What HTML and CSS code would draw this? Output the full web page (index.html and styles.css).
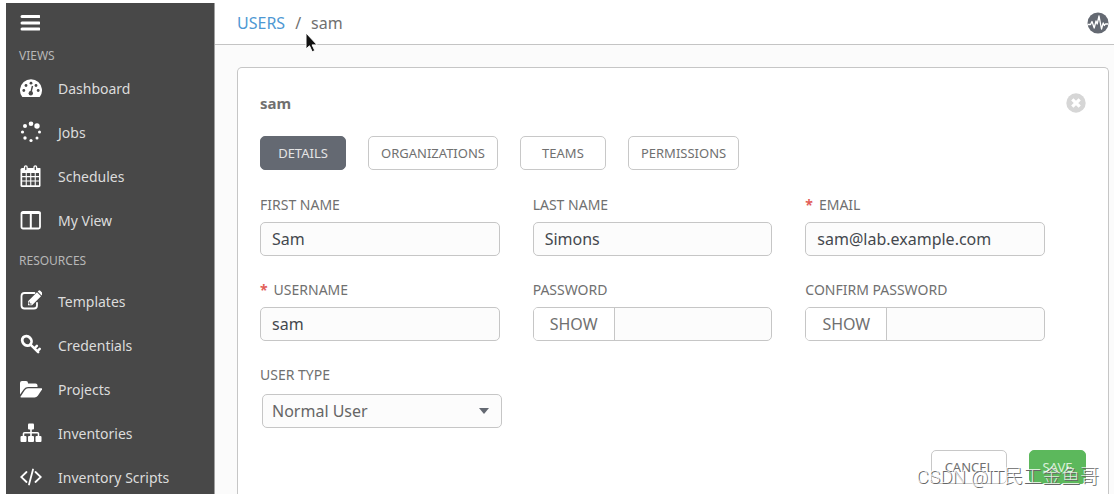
FILE: index.html
```
<!DOCTYPE html>
<html lang="en">
<head>
    <meta charset="UTF-8">
    <meta name="viewport" content="width=device-width, initial-scale=1.0">
    <title>Users / sam</title>
    <link rel="stylesheet" href="styles.css">
</head>
<body>

    <div class="app">
        <nav class="sidebar">
            <button class="menu-toggle" type="button" aria-label="Toggle menu">
                <svg width="20" height="18" viewBox="0 0 20 18"><path d="M2 2.5h17M2 9h17M2 15h17" stroke="#fff" stroke-width="3" stroke-linecap="round"/></svg>
            </button>

            <h2 class="nav-title">VIEWS</h2>
            <a class="nav-item" href="#">
                <svg class="icon" viewBox="0 0 22 22">
                    <path fill="#fff" d="M2 19.5A11 11 0 1 1 20 19.5Q19.700 20 19 20H3Q2.300 20 2 19.500z"/>
                    <g fill="#484848"><circle cx="3.800" cy="13.500" r="1.400"/><circle cx="6" cy="8.500" r="1.400"/><circle cx="11" cy="6.200" r="1.400"/><circle cx="16" cy="8.500" r="1.400"/><circle cx="18.200" cy="13.500" r="1.400"/><circle cx="10.800" cy="16.200" r="2.200"/></g>
                    <path d="M10.800 16l1.700-7" stroke="#484848" stroke-width="1.400"/>
                </svg>
                <span>Dashboard</span>
            </a>
            <a class="nav-item" href="#">
                <svg class="icon" viewBox="0 0 22 22" fill="#fff">
                    <circle cx="11" cy="2.800" r="2.300"/><circle cx="17" cy="5" r="2.700"/><circle cx="19.500" cy="11" r="1.500"/><circle cx="17" cy="17" r="1.500"/><circle cx="11" cy="19.500" r="1.600"/><circle cx="5" cy="17" r="1.700"/><circle cx="2.500" cy="11" r="1.600"/><circle cx="5" cy="5" r="2"/>
                </svg>
                <span>Jobs</span>
            </a>
            <a class="nav-item" href="#">
                <svg class="icon" viewBox="0 0 22 22">
                    <path fill="#fff" d="M2 3h18q.500 0 .500.700V20.500q0 1.500-1.500 1.500H2Q.500 22 .500 20.500V4.500Q.500 3 2 3z"/>
                    <path fill="#484848" d="M2.200 8h3.500v3H2.200zM6.800 8h3.400v3H6.800zM11.300 8h3.400v3h-3.400zM15.800 8h3.200v3h-3.200zM2.200 12.200h3.500v3.200H2.200zM6.800 12.200h3.400v3.200H6.800zM11.300 12.200h3.400v3.200h-3.400zM15.800 12.200h3.200v3.200h-3.200zM2.200 16.600h3.500v3.600H2.200zM6.800 16.600h3.400v3.600H6.800zM11.300 16.600h3.400v3.600h-3.400zM15.800 16.600h3.200v3.600h-3.200z"/>
                    <g fill="#484848" stroke="#fff" stroke-width="1.300"><rect x="4.500" y=".8" width="2.600" height="5" rx="1.300"/><rect x="14" y=".8" width="2.600" height="5" rx="1.300"/></g>
                </svg>
                <span>Schedules</span>
            </a>
            <a class="nav-item" href="#">
                <svg class="icon" viewBox="0 0 22 22">
                    <rect x="1.500" y="3" width="18.500" height="16.500" rx="1.500" fill="none" stroke="#fff" stroke-width="1.800"/>
                    <path d="M1 4h19.500M10.800 4v15" stroke="#fff" stroke-width="2"/>
                </svg>
                <span>My View</span>
            </a>

            <h2 class="nav-title nav-title-spaced">RESOURCES</h2>
            <a class="nav-item" href="#">
                <svg class="icon" viewBox="0 0 22 22">
                    <path d="M14.500 3H4.500Q1.500 3 1.500 6v9.500Q1.500 18.500 4.500 18.500H14q3 0 3-3v-2.700" fill="none" stroke="#fff" stroke-width="1.800" stroke-linecap="round"/>
                    <path fill="#fff" d="M8 15.200v-4L17 2.200l4 4-9 9zM17.700 1.500l.8-.8q.9-.7 1.800 0l2 2.100q.700.900 0 1.700l-.8.900z"/>
                    <path d="M9.200 11.600v2.400h2.300" fill="none" stroke="#484848" stroke-width="1"/>
                </svg>
                <span>Templates</span>
            </a>
            <a class="nav-item" href="#">
                <svg class="icon" viewBox="0 0 22 22">
                    <g transform="rotate(45 7 7)"><ellipse cx="6.800" cy="7" rx="5" ry="4.300" fill="none" stroke="#fff" stroke-width="2.800"/><path d="M12 7h10.800M17.500 7v-3.500M21.500 7v-3.500" stroke="#fff" stroke-width="2.500" stroke-linecap="round"/></g>
                </svg>
                <span>Credentials</span>
            </a>
            <a class="nav-item" href="#">
                <svg class="icon" viewBox="0 0 22 22" fill="#fff">
                    <path d="M0 16.500V5q0-2 2-2h4q2 0 2 2v.5h7.500q2 0 2 2V9H8q-2.500 0-4 2z"/>
                    <path d="M.3 19l4.600-7q1.200-1.700 3-1.700H21.500q1 .2.500 1.200l-4.200 6.300q-1.200 1.700-3.200 1.700H1z"/>
                </svg>
                <span>Projects</span>
            </a>
            <a class="nav-item" href="#">
                <svg class="icon" viewBox="0 0 22 22" fill="#fff">
                    <rect x="8" y="1.500" width="6" height="6" rx="1"/><rect x="0.500" y="14" width="6" height="6" rx="1"/><rect x="8" y="14" width="6" height="6" rx="1"/><rect x="15.500" y="14" width="6" height="6" rx="1"/>
                    <path d="M11 7v8M3.500 15v-3.200q0-1 1-1h13q1 0 1 1V15" fill="none" stroke="#fff" stroke-width="1.600"/>
                </svg>
                <span>Inventories</span>
            </a>
            <a class="nav-item" href="#">
                <svg class="icon" viewBox="0 0 22 22">
                    <path d="M6.500 6l-5.300 5 5.300 5M15.500 6l5.300 5-5.300 5M13 3.500L9 18.500" fill="none" stroke="#fff" stroke-width="1.800" stroke-linecap="round"/>
                </svg>
                <span>Inventory Scripts</span>
            </a>
        </nav>

        <div class="main">
            <header class="topbar">
                <div class="breadcrumb">
                    <a href="#">USERS</a>
                    <span>/</span>
                    <span>sam</span>
                </div>
                <button class="round-button" type="button" aria-label="Activity stream">
                    <svg width="22" height="22" viewBox="0 0 22 22"><circle cx="11" cy="11" r="10.500" fill="#646972"/><path d="M1 12.500h2.500l1.500-3 2.200 6.500L9 9l1.200 3L12 4l2.500 13 1.700-6 1.200 2.500 1-1.500H21" fill="none" stroke="#fff" stroke-width="1.300" stroke-linejoin="round"/></svg>
                </button>
            </header>

            <main class="card">
                <div class="card-header">
                    <h1>sam</h1>
                    <button class="round-button" type="button" aria-label="Close">
                        <svg width="20" height="20" viewBox="0 0 20 20"><circle cx="10" cy="10" r="9.700" fill="#d6d6d6"/><path d="M6.300 6.300l7.400 7.400M13.700 6.300l-7.400 7.400" stroke="#fff" stroke-width="3.200"/></svg>
                    </button>
                </div>

                <div class="tabs">
                    <button class="btn active" type="button">DETAILS</button>
                    <button class="btn" type="button">ORGANIZATIONS</button>
                    <button class="btn" type="button">TEAMS</button>
                    <button class="btn" type="button">PERMISSIONS</button>
                </div>

                <form>
                    <div class="fields">
                        <div class="field">
                            <label for="first-name">FIRST NAME</label>
                            <input class="control" id="first-name" type="text" value="Sam">
                        </div>
                        <div class="field">
                            <label for="last-name">LAST NAME</label>
                            <input class="control" id="last-name" type="text" value="Simons">
                        </div>
                        <div class="field">
                            <label for="email"><span class="required">*</span>EMAIL</label>
                            <input class="control" id="email" type="text" value="sam@lab.example.com">
                        </div>
                        <div class="field">
                            <label for="username"><span class="required">*</span>USERNAME</label>
                            <input class="control" id="username" type="text" value="sam">
                        </div>
                        <div class="field">
                            <label for="password">PASSWORD</label>
                            <div class="control password">
                                <button type="button">SHOW</button>
                                <input id="password" type="password">
                            </div>
                        </div>
                        <div class="field">
                            <label for="confirm">CONFIRM PASSWORD</label>
                            <div class="control password">
                                <button type="button">SHOW</button>
                                <input id="confirm" type="password">
                            </div>
                        </div>
                        <div class="field">
                            <label for="user-type">USER TYPE</label>
                            <div class="select">
                                <select class="control" id="user-type">
                                    <option>Normal User</option>
                                </select>
                            </div>
                        </div>
                    </div>

                    <div class="actions">
                        <button class="btn cancel" type="button">CANCEL</button>
                        <button class="btn save" type="button">SAVE</button>
                    </div>
                </form>
            </main>
        </div>
    </div>

    <svg class="cursor" width="14" height="22" viewBox="0 0 14 22"><path d="M1 1v16l3.500-3.200 2.700 6 2.600-1.200-2.700-5.700h5z" fill="#111" stroke="#fff" stroke-width="1"/></svg>
    <div class="watermark">CSDN @IT民工金鱼哥</div>

</body>
</html>
```
FILE: styles.css
```
* {
    box-sizing: border-box;
}

body {
    margin: 0;
    padding: 3px 0 2px 6px;
    height: 100vh;
    overflow: hidden;
    background-color: white;
    font-family: "Noto Sans", "Open Sans", sans-serif;
    font-size: 14px;
    color: #707070;
}

button,
input,
select {
    font-family: inherit;
    color: inherit;
}

button {
    cursor: pointer;
}

.app {
    display: flex;
    height: 100%;
    overflow: hidden;
}

/* Sidebar */
.sidebar {
    flex: none;
    width: 209px;
    background-color: #484848;
    border-right: 1px solid #a0a0a0;
}

.menu-toggle {
    display: block;
    height: 43px;
    padding: 2px 14px 6px;
    border: none;
    background: none;
}

.menu-toggle svg {
    display: block;
}

.nav-title {
    margin: 0;
    padding-left: 13px;
    font-size: 12px;
    font-weight: normal;
    line-height: 20px;
    color: #b7b7b7;
}

.nav-title-spaced {
    line-height: 37px;
}

.nav-item {
    display: flex;
    align-items: center;
    gap: 16px;
    height: 44px;
    padding-left: 14px;
    color: #dcdcdc;
    text-decoration: none;
}

.icon {
    width: 22px;
    height: 22px;
}

/* Content */
.main {
    flex: 1;
    display: flex;
    flex-direction: column;
    min-width: 0;
    background-color: #fbfbfb;
}

.topbar {
    flex: none;
    display: flex;
    align-items: center;
    justify-content: space-between;
    height: 42px;
    padding: 0 5px 2px 22px;
    background-color: white;
    border-bottom: 1px solid #c4c4c4;
}

.breadcrumb {
    display: flex;
    gap: 10px;
    font-size: 16px;
}

.breadcrumb a {
    color: #4e98d3;
    text-decoration: none;
}

.round-button {
    padding: 0;
    border: none;
    background: none;
}

.round-button svg {
    display: block;
}

.card {
    flex: 1;
    margin: 22px 5px 0 22px;
    padding: 24px 22px 0;
    background-color: white;
    border: 1px solid #c6c6c6;
    border-bottom: none;
    border-radius: 5px 5px 0 0;
}

.card-header {
    display: flex;
    align-items: center;
    justify-content: space-between;
    height: 22px;
}

.card h1 {
    margin: 0;
    font-size: 15px;
    font-weight: bold;
}

.tabs {
    display: flex;
    gap: 22px;
    margin: 22px 0;
}

.btn {
    min-width: 86px;
    height: 34px;
    padding: 0 12px;
    font-size: 13px;
    background-color: white;
    border: 1px solid #c8c8c8;
    border-radius: 5px;
}

.btn.active {
    color: #e4e4e4;
    background-color: #646972;
    border-color: #646972;
}

.fields {
    display: grid;
    grid-template-columns: repeat(3, minmax(0, 1fr));
    column-gap: 33px;
    row-gap: 21px;
    padding-right: 41px;
}

label {
    display: block;
    height: 30px;
    line-height: 26px;
}

.required {
    margin-right: 6px;
    font-weight: bold;
    color: #e25e59;
}

.control {
    display: block;
    width: 100%;
    height: 34px;
    padding: 0 11px;
    font-size: 16px;
    color: #44484e;
    background-color: #fcfcfc;
    border: 1px solid #c6c6c6;
    border-radius: 5px;
}

.password {
    display: flex;
    padding: 0;
    overflow: hidden;
}

.password button {
    flex: none;
    width: 81px;
    font-size: 16px;
    color: #707070;
    background-color: white;
    border: none;
    border-right: 1px solid #c6c6c6;
}

.password input {
    flex: 1;
    min-width: 0;
    border: none;
    background: none;
}

.select {
    position: relative;
    margin: 2px -2px 0 2px;
}

.select select {
    padding: 0 9px;
    color: #666;
    appearance: none;
}

.select::after {
    content: "";
    position: absolute;
    top: 14px;
    right: 13px;
    border: 5px solid transparent;
    border-top: 6px solid #646972;
    border-bottom: none;
    pointer-events: none;
}

.actions {
    display: flex;
    justify-content: flex-end;
    gap: 22px;
    margin-top: 22px;
}

.cancel {
    min-width: 76px;
}

.save {
    min-width: 57px;
    color: #d9f0d9;
    background-color: #5cb85c;
    border-color: #5cb85c;
}

/* Overlays */
.cursor {
    position: absolute;
    top: 32px;
    left: 305px;
}

.watermark {
    position: absolute;
    right: 15px;
    bottom: 4px;
    font-family: Roboto, "Noto Sans CJK SC", sans-serif;
    font-size: 19px;
    line-height: 30px;
    font-weight: 300;
    color: rgba(255, 255, 255, 0.8);
    text-shadow: 1px 1px 0 #666;
}
```
